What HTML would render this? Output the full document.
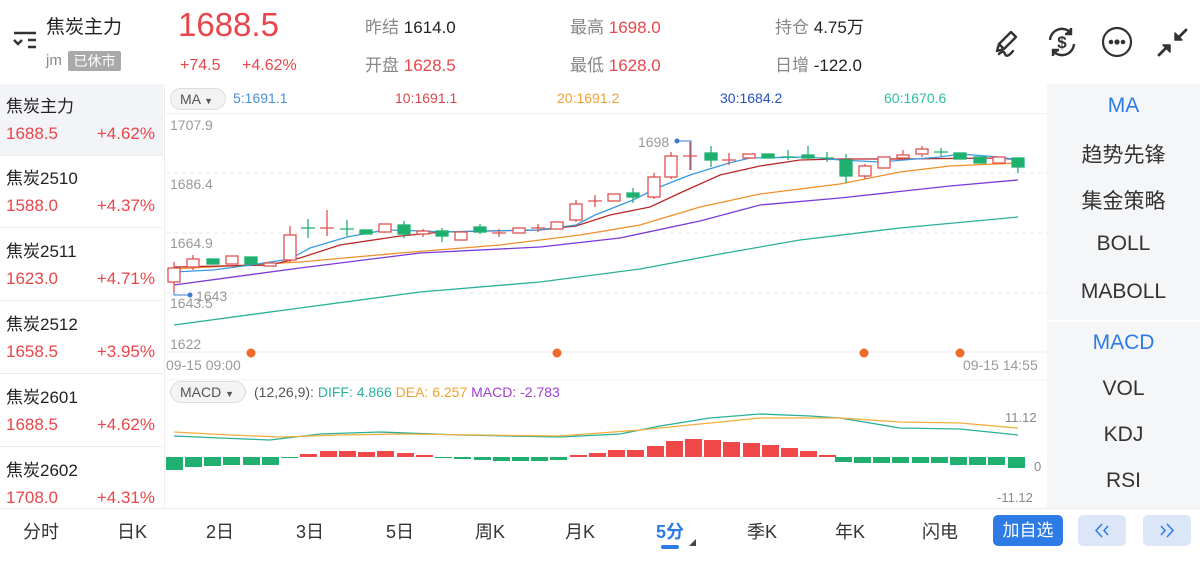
<!DOCTYPE html>
<html><head><meta charset="utf-8"><style>
*{margin:0;padding:0;box-sizing:border-box}
body{width:1200px;height:567px;background:#fff;font-family:"Liberation Sans","Noto Sans CJK SC",sans-serif;position:relative;overflow:hidden;color:#333}
.a{position:absolute;white-space:nowrap}
.r{color:#e8464a}.g{color:#888}.k{color:#222}
.lrow{position:absolute;left:0;width:163px;height:72px;border-bottom:1px solid #eee}
.lrow .n{position:absolute;left:6px;top:8px;font-size:17px;color:#222}
.lrow .p{position:absolute;left:6px;top:40px;font-size:17px;color:#e8464a}
.lrow .c{position:absolute;right:8px;top:40px;font-size:17px;color:#e8464a}
.rp{position:absolute;left:1047px;width:153px;text-align:center;font-size:21px;color:#333}
.tab{position:absolute;top:518px;font-size:18px;color:#333;transform:translateX(-50%)}
</style></head><body>
<!-- header -->
<svg class="a" style="left:12px;top:30px" width="26" height="22" viewBox="0 0 26 22"><path d="M2 3H24M2 10l4 4 4-4M16 10H24M16 17H24" stroke="#333" stroke-width="2.4" fill="none"/></svg>
<div class="a k" style="left:46px;top:12px;font-size:19px">焦炭主力</div>
<div class="a g" style="left:46px;top:52px;font-size:15px">jm</div>
<div class="a" style="left:68px;top:51px;width:53px;height:20px;background:#a9a9a9;color:#fff;font-size:14px;text-align:center;line-height:20px;border-radius:2px">已休市</div>
<div class="a r" style="left:178px;top:6px;font-size:33px">1688.5</div>
<div class="a r" style="left:180px;top:57px;font-size:16px">+74.5</div>
<div class="a r" style="left:242px;top:57px;font-size:16px">+4.62%</div>
<div class="a" style="left:365px;top:13px;font-size:17px"><span class="g">昨结</span> <span class="k">1614.0</span></div>
<div class="a" style="left:365px;top:51px;font-size:17px"><span class="g">开盘</span> <span class="r">1628.5</span></div>
<div class="a" style="left:570px;top:13px;font-size:17px"><span class="g">最高</span> <span class="r">1698.0</span></div>
<div class="a" style="left:570px;top:51px;font-size:17px"><span class="g">最低</span> <span class="r">1628.0</span></div>
<div class="a" style="left:775px;top:13px;font-size:17px"><span class="g">持仓</span> <span class="k">4.75万</span></div>
<div class="a" style="left:775px;top:51px;font-size:17px"><span class="g">日增</span> <span class="k">-122.0</span></div>
<!-- icons -->
<svg class="a" style="left:988px;top:24px" width="36" height="36" viewBox="0 0 36 36" fill="none" stroke="#333" stroke-width="2.4" stroke-linejoin="round" stroke-linecap="round"><path d="M9 27L11 20L23 8L28 13L16 25Z M11 20L16 25"/><path d="M11 30c3-3 5-3 6 0s4 2 8-3"/></svg>
<svg class="a" style="left:1044px;top:24px" width="36" height="36" viewBox="0 0 36 36" fill="none" stroke="#333" stroke-width="2.4"><path d="M6 16a12 12 0 0 1 21-7M30 20a12 12 0 0 1-21 7"/><path d="M27 4v6h-6M9 32v-6h6" fill="#333"/><text x="18" y="24" font-size="17" text-anchor="middle" fill="#333" stroke="none" font-family="Liberation Sans" font-weight="bold">$</text></svg>
<svg class="a" style="left:1100px;top:24px" width="36" height="36" viewBox="0 0 36 36" fill="none" stroke="#333" stroke-width="2.2"><circle cx="17" cy="18" r="14"/><circle cx="11" cy="18" r="1.2" fill="#333"/><circle cx="17" cy="18" r="1.5" fill="#333"/><circle cx="23" cy="18" r="1.2" fill="#333"/></svg>
<svg class="a" style="left:1155px;top:24px" width="36" height="36" viewBox="0 0 36 36" fill="#333" stroke="#333" stroke-width="2.8" stroke-linecap="round"><path d="M31 6L24 13M4 31l7-7"/><path d="M20 16V9L27 16Z M15 21V28L8 21Z" stroke-width="1.5" stroke-linejoin="round"/></svg>
<!-- left list -->
<div class="lrow" style="top:84px;background:#f3f4f8"><div class="n">焦炭主力</div><div class="p">1688.5</div><div class="c">+4.62%</div></div>
<div class="lrow" style="top:156px"><div class="n">焦炭2510</div><div class="p">1588.0</div><div class="c">+4.37%</div></div>
<div class="lrow" style="top:229px"><div class="n">焦炭2511</div><div class="p">1623.0</div><div class="c">+4.71%</div></div>
<div class="lrow" style="top:302px"><div class="n">焦炭2512</div><div class="p">1658.5</div><div class="c">+3.95%</div></div>
<div class="lrow" style="top:375px"><div class="n">焦炭2601</div><div class="p">1688.5</div><div class="c">+4.62%</div></div>
<div class="lrow" style="top:448px;border:none"><div class="n">焦炭2602</div><div class="p">1708.0</div><div class="c">+4.31%</div></div>
<div class="a" style="left:164px;top:84px;width:1px;height:424px;background:#eee"></div>
<!-- right panel -->
<div class="a" style="left:1047px;top:84px;width:153px;height:424px;background:#f5f6f8"></div>
<div class="a" style="left:1047px;top:320px;width:153px;height:2px;background:#fff"></div>
<div class="rp" style="top:94px;color:#2d7be5">MA</div>
<div class="rp" style="top:139px">趋势先锋</div>
<div class="rp" style="top:185px">集金策略</div>
<div class="rp" style="top:232px">BOLL</div>
<div class="rp" style="top:280px">MABOLL</div>
<div class="rp" style="top:331px;color:#2d7be5">MACD</div>
<div class="rp" style="top:377px">VOL</div>
<div class="rp" style="top:423px">KDJ</div>
<div class="rp" style="top:469px">RSI</div>
<!-- MA header -->
<div class="a" style="left:170px;top:88px;width:56px;height:22px;border:1px solid #ddd;background:#f3f3f3;border-radius:11px;font-size:14px;color:#555;line-height:20px;padding-left:9px">MA <span style="font-size:9px">▼</span></div>
<div class="a" style="left:233px;top:90px;font-size:14px;color:#4a90d9">5:1691.1</div>
<div class="a" style="left:395px;top:90px;font-size:14px;color:#d9464a">10:1691.1</div>
<div class="a" style="left:557px;top:90px;font-size:14px;color:#f0a030">20:1691.2</div>
<div class="a" style="left:720px;top:90px;font-size:14px;color:#2850c0">30:1684.2</div>
<div class="a" style="left:884px;top:90px;font-size:14px;color:#2ec0a0">60:1670.6</div>
<div class="a" style="left:166px;top:113px;width:881px;height:1px;background:#f0f0f0"></div>
<!-- main chart -->
<svg class="a" style="left:0;top:0" width="1047" height="567">
<g stroke="#e8e8e8" stroke-dasharray="4 4"><path d="M166 173H1047M166 233H1047M166 293H1047"/></g>
<path d="M166 352H1047" stroke="#eee"/>
<g font-size="14" fill="#999" font-family="Liberation Sans"><text x="170" y="130">1707.9</text><text x="170" y="189">1686.4</text><text x="170" y="248">1664.9</text><text x="170" y="308">1643.5</text><text x="170" y="349">1622</text>
<text x="166" y="370">09-15 09:00</text><text x="963" y="370">09-15 14:55</text><text x="196" y="301">1643</text><text x="638" y="147">1698</text></g>
<path d="M174 282V295H190M677 141H691V170" stroke="#3a7ad0" fill="none"/><circle cx="190" cy="295" r="2.5" fill="#3a7ad0"/><circle cx="677" cy="141" r="2.5" fill="#3a7ad0"/>
<g fill="#f06a2a"><circle cx="251" cy="353" r="4.5"/><circle cx="557" cy="353" r="4.5"/><circle cx="864" cy="353" r="4.5"/><circle cx="960" cy="353" r="4.5"/></g>
<g fill="none" stroke-width="1.3">
<polyline stroke="#2ab098" points="174,325 300,308 420,292 540,282 640,269 720,254 800,240 900,228 1018,217"/>
<polyline stroke="#7a3ad8" points="174,285 300,268 420,253 540,247 620,238 700,221 760,205 840,198 950,186 1018,180"/>
<polyline stroke="#f0902a" points="174,269 300,262 400,253 500,245 580,235 640,225 700,207 760,194 840,184 900,172 950,166 1018,163"/>
<polyline stroke="#b8282a" points="174,267 270,265 300,258 340,245 400,236 442,232 540,230 576,226 610,215 650,207 680,193 720,175 760,166 800,160 840,159 900,159 1000,158 1018,160"/>
<polyline stroke="#3a9ae0" points="174,272 213,270 251,265 290,259 310,248 347,237 385,230 423,231 442,232 480,231 538,230 576,225 595,215 633,200 657,188 690,175 729,163 750,158 808,157 840,160 880,162 940,157 960,154 999,157 1018,160"/>
</g>
<g stroke-width="1.3">
<g stroke="#e05050" fill="#fff">
<path d="M174 262V292"/><rect x="168" y="268" width="12" height="14"/>
<path d="M193 255V270"/><rect x="187" y="259" width="12" height="8"/>
<rect x="226" y="256" width="12" height="8"/>
<rect x="264" y="263" width="12" height="3"/>
<path d="M290 226V262"/><rect x="284" y="235" width="12" height="25"/>
<path d="M327 210V236M320 228H334"/>
<rect x="379" y="224" width="12" height="8"/>
<path d="M423 229V237"/><rect x="417" y="231" width="12" height="3"/>
<rect x="455" y="232" width="12" height="8"/>
<path d="M499 229V237M492 233H506"/>
<rect x="513" y="228" width="12" height="5"/>
<path d="M538 224V232M531 228H545"/>
<rect x="551" y="222" width="12" height="7"/>
<path d="M576 200V222"/><rect x="570" y="204" width="12" height="16"/>
<path d="M595 195V207M588 201H602"/>
<rect x="608" y="194" width="12" height="7"/>
<path d="M654 173V199"/><rect x="648" y="177" width="12" height="20"/>
<path d="M671 152V179"/><rect x="665" y="156" width="12" height="21"/>
<path d="M690 142V170M683 156H697"/>
<path d="M729 153V165M722 160H736"/>
<rect x="743" y="154" width="12" height="4"/>
<path d="M865 164V179"/><rect x="859" y="166" width="12" height="10"/>
<rect x="878" y="157" width="12" height="11"/>
<path d="M903 150V160"/><rect x="897" y="155" width="12" height="3"/>
<path d="M922 146V157"/><rect x="916" y="149" width="12" height="5"/>
<rect x="993" y="157" width="12" height="6"/>
</g>
<g stroke="#1fb070" fill="#1fb070">
<rect x="207" y="259" width="12" height="5"/>
<rect x="245" y="257" width="12" height="7"/>
<path d="M308 219V238M301 228H315"/>
<path d="M347 220V236M340 229H354"/>
<rect x="360" y="230" width="12" height="4"/>
<path d="M404 221V238"/><rect x="398" y="225" width="12" height="9"/>
<path d="M442 228V242"/><rect x="436" y="231" width="12" height="5"/>
<path d="M480 224V234"/><rect x="474" y="227" width="12" height="5"/>
<path d="M633 188V203"/><rect x="627" y="193" width="12" height="4"/>
<path d="M711 146V167"/><rect x="705" y="153" width="12" height="7"/>
<rect x="762" y="154" width="12" height="4"/>
<path d="M788 150V160M781 157H795"/>
<path d="M808 146V159"/><rect x="802" y="155" width="12" height="3"/>
<path d="M827 152V162M820 158H834"/>
<path d="M846 154V183"/><rect x="840" y="160" width="12" height="16"/>
<path d="M941 148V156M934 152H948"/>
<rect x="954" y="153" width="12" height="6"/>
<rect x="974" y="157" width="12" height="6"/>
<path d="M1018 158V173"/><rect x="1012" y="158" width="12" height="9"/>
</g>
</g>
<!-- MACD -->
<path d="M166 380H1047" stroke="#f0f0f0"/>
<g fill="none" stroke-width="1.3">
<polyline stroke="#2ab098" points="174,436 220,438 270,440 320,434 380,432 460,435 560,437 620,434 660,426 710,418 760,414 810,416 840,418 900,428 960,429 1018,435"/>
<polyline stroke="#f0b040" points="174,432 230,435 280,437 340,435 400,434 480,435 560,436 640,430 700,424 760,418 840,418 900,422 960,423 1018,428"/>
</g>
<g font-size="13" fill="#888" font-family="Liberation Sans"><text x="1005" y="422">11.12</text><text x="1034" y="471">0</text><text x="997" y="502">-11.12</text></g>
<g fill="#1fb070">
<rect x="166" y="457" width="17" height="13"/><rect x="185" y="457" width="17" height="10"/><rect x="204" y="457" width="17" height="9"/><rect x="223" y="457" width="17" height="8"/><rect x="243" y="457" width="17" height="8"/><rect x="262" y="457" width="17" height="8"/><rect x="281" y="457" width="17" height="1"/>
<rect x="435" y="457" width="17" height="1"/><rect x="454" y="457" width="17" height="2"/><rect x="474" y="457" width="17" height="3"/><rect x="493" y="457" width="17" height="4"/><rect x="512" y="457" width="17" height="4"/><rect x="531" y="457" width="17" height="4"/><rect x="550" y="457" width="17" height="3"/>
<rect x="835" y="457" width="17" height="5"/><rect x="854" y="457" width="17" height="6"/><rect x="873" y="457" width="17" height="6"/><rect x="892" y="457" width="17" height="6"/><rect x="912" y="457" width="17" height="6"/><rect x="931" y="457" width="17" height="6"/><rect x="950" y="457" width="17" height="8"/><rect x="969" y="457" width="17" height="8"/><rect x="988" y="457" width="17" height="8"/><rect x="1008" y="457" width="17" height="11"/>
</g>
<g fill="#f04848">
<rect x="300" y="454" width="17" height="3"/><rect x="320" y="451" width="17" height="6"/><rect x="339" y="451" width="17" height="6"/><rect x="358" y="452" width="17" height="5"/><rect x="377" y="451" width="17" height="6"/><rect x="397" y="453" width="17" height="4"/><rect x="416" y="455" width="17" height="2"/>
<rect x="570" y="455" width="17" height="2"/><rect x="589" y="453" width="17" height="4"/><rect x="608" y="450" width="17" height="7"/><rect x="627" y="450" width="17" height="7"/><rect x="647" y="446" width="17" height="11"/><rect x="666" y="441" width="17" height="16"/><rect x="685" y="439" width="17" height="18"/><rect x="704" y="440" width="17" height="17"/><rect x="723" y="442" width="17" height="15"/><rect x="743" y="443" width="17" height="14"/><rect x="762" y="445" width="17" height="12"/><rect x="781" y="448" width="17" height="9"/><rect x="800" y="451" width="17" height="6"/><rect x="819" y="455" width="17" height="2"/>
</g>
</svg>
<div class="a" style="left:170px;top:381px;width:76px;height:22px;border:1px solid #ddd;background:#f3f3f3;border-radius:11px;font-size:14px;color:#555;line-height:20px;padding-left:9px">MACD <span style="font-size:9px">▼</span></div>
<div class="a" style="left:254px;top:384px;font-size:14px"><span style="color:#555">(12,26,9):</span> <span style="color:#2ab0a0">DIFF: 4.866</span> <span style="color:#f0a030">DEA: 6.257</span> <span style="color:#a040d0">MACD: -2.783</span></div>
<!-- bottom bar -->
<div class="a" style="left:0;top:508px;width:1200px;height:1px;background:#eee"></div>
<div class="tab" style="left:41px">分时</div>
<div class="tab" style="left:132px">日K</div>
<div class="tab" style="left:220px">2日</div>
<div class="tab" style="left:310px">3日</div>
<div class="tab" style="left:400px">5日</div>
<div class="tab" style="left:490px">周K</div>
<div class="tab" style="left:580px">月K</div>
<div class="tab" style="left:670px;color:#2d7be5;font-weight:bold">5分</div>
<div class="a" style="left:661px;top:545px;width:18px;height:4px;border-radius:2px;background:#2d7be5"></div>
<div class="a" style="left:689px;top:539px;width:0;height:0;border-left:7px solid transparent;border-bottom:7px solid #444"></div>
<div class="tab" style="left:762px">季K</div>
<div class="tab" style="left:850px">年K</div>
<div class="tab" style="left:940px">闪电</div>
<div class="a" style="left:993px;top:515px;width:70px;height:31px;background:#2d7be5;color:#fff;border-radius:5px;font-size:17px;text-align:center;line-height:31px">加自选</div>
<div class="a" style="left:1078px;top:515px;width:48px;height:31px;background:#dbe7f8;border-radius:5px"><svg width="48" height="31" viewBox="0 0 48 31" fill="none" stroke="#2d7be5" stroke-width="1.5"><path d="M24 9l-6 6.5 6 6.5M30 11l-4 4.5 4 4.5"/></svg></div>
<div class="a" style="left:1143px;top:515px;width:48px;height:31px;background:#dbe7f8;border-radius:5px"><svg width="48" height="31" viewBox="0 0 48 31" fill="none" stroke="#2d7be5" stroke-width="1.5"><path d="M18 11l4 4.5-4 4.5M24 9l6 6.5-6 6.5"/></svg></div>
</body></html>
